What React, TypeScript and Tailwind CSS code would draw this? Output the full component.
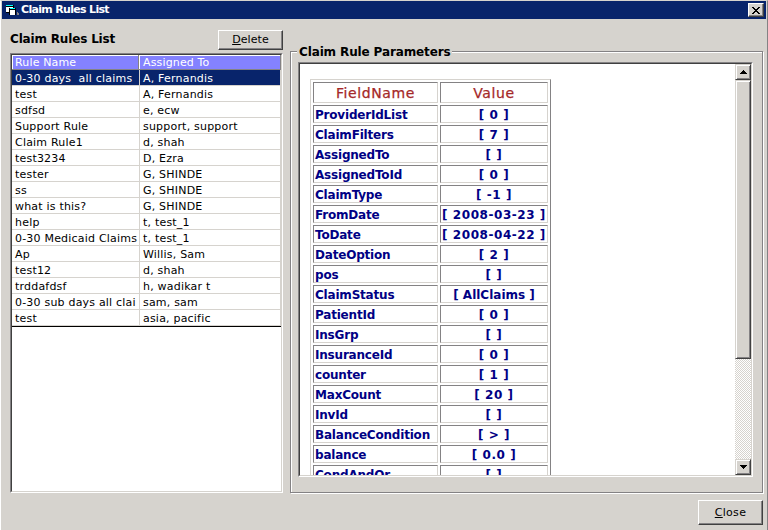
import React from "react";

const rules: [string, string][] = [
  ["0-30 days\u00a0 all claims", "A, Fernandis"],
  ["test", "A, Fernandis"],
  ["sdfsd", "e, ecw"],
  ["Support Rule", "support, support"],
  ["Claim Rule1", "d, shah"],
  ["test3234", "D, Ezra"],
  ["tester", "G, SHINDE"],
  ["ss", "G, SHINDE"],
  ["what is this?", "G, SHINDE"],
  ["help", "t, test_1"],
  ["0-30 Medicaid Claims", "t, test_1"],
  ["Ap", "Willis, Sam"],
  ["test12", "d, shah"],
  ["trddafdsf", "h, wadikar t"],
  ["0-30 sub days all clai", "sam, sam"],
  ["test", "asia, pacific"],
];

const params: [string, string][] = [
  ["ProviderIdList", "[ 0 ]"],
  ["ClaimFilters", "[ 7 ]"],
  ["AssignedTo", "[ ]"],
  ["AssignedToId", "[ 0 ]"],
  ["ClaimType", "[ -1 ]"],
  ["FromDate", "[ 2008-03-23 ]"],
  ["ToDate", "[ 2008-04-22 ]"],
  ["DateOption", "[ 2 ]"],
  ["pos", "[ ]"],
  ["ClaimStatus", "[ AllClaims ]"],
  ["PatientId", "[ 0 ]"],
  ["InsGrp", "[ ]"],
  ["InsuranceId", "[ 0 ]"],
  ["counter", "[ 1 ]"],
  ["MaxCount", "[ 20 ]"],
  ["InvId", "[ ]"],
  ["BalanceCondition", "[ > ]"],
  ["balance", "[ 0.0 ]"],
  ["CondAndOr", "[ ]"],
];

const raised =
  "border border-t-white border-l-white border-r-[#404040] border-b-[#404040] bg-[#d6d3ce] shadow-[inset_-1px_-1px_0_#848284]";
const scrollRaised =
  "border border-t-[#d6d3ce] border-l-[#d6d3ce] border-r-[#404040] border-b-[#404040] bg-[#d6d3ce] shadow-[inset_1px_1px_0_#fff,inset_-1px_-1px_0_#848284]";
const cell =
  "shrink-0 border border-t-[#848284] border-l-[#848284] border-r-[#d6d3ce] border-b-[#d6d3ce] whitespace-nowrap";

function AppIcon() {
  return (
    <svg width="13" height="12" viewBox="0 0 13 12" shapeRendering="crispEdges">
      <path d="M0 1h8v8H0z" fill="#000" />
      <path d="M0 3h7v5H0z" fill="#fff" />
      <path d="M0 1h7v1H0z" fill="#00ffff" />
      <path d="M3 4h7v7H3z" fill="#000" />
      <path d="M4 6h5v5H4z" fill="#fff" />
      <path d="M4 4h5v1H4z" fill="#00ffff" />
      <path d="M11 8h1v1h1v2h-2z" fill="#848284" />
    </svg>
  );
}

function ScrollBar() {
  return (
    <div className="flex w-4 shrink-0 flex-col bg-[repeating-conic-gradient(#d6d3ce_0_25%,#fff_0_50%)] bg-[length:2px_2px]">
      <div className={`flex h-4 items-center justify-center ${scrollRaised}`}>
        <svg width="7" height="4" viewBox="0 0 7 4" shapeRendering="crispEdges">
          <path d="M3 0h1v1h1v1h1v1h1v1H0V3h1V2h1V1h1z" />
        </svg>
      </div>
      <div className={`h-[279px] ${scrollRaised}`} />
      <div className={`mt-auto flex h-4 items-center justify-center ${scrollRaised}`}>
        <svg width="7" height="4" viewBox="0 0 7 4" shapeRendering="crispEdges">
          <path d="M0 0h7v1H6v1H5v1H4v1H3V3H2V2H1V1H0z" />
        </svg>
      </div>
    </div>
  );
}

export default function App() {
  return (
    <div className="flex h-[530px] w-[768px] flex-col overflow-hidden border-t border-r border-l border-t-[#d6d3ce] border-r-[#848284] border-l-white bg-[#d6d3ce] font-['DejaVu_Sans',Verdana,sans-serif] text-[11px] text-black">
      <header className="mr-px ml-px flex h-[18px] shrink-0 items-center bg-[#08246b] pr-[2px] pl-1">
        <AppIcon />
        <span className="ml-[2px] pt-px text-[11px] font-bold tracking-[-0.68px] whitespace-nowrap text-white">
          Claim Rules List
        </span>
        <button className={`ml-auto flex h-[14px] w-4 items-center justify-center ${raised}`}>
          <svg width="8" height="7" viewBox="0 0 8 7" shapeRendering="crispEdges">
            <path d="M0 0h2v1h1v1h2V1h1V0h2v1H7v1H6v1H5v1h1v1h1v1h1v1H6V6H5V5H3v1H2v1H0V6h1V5h1V4h1V3H2V2H1V1H0z" />
          </svg>
        </button>
      </header>

      <main className="flex h-[474px] shrink-0 pl-[9px]">
        <section className="w-[273px] shrink-0">
          <div className="flex h-[34px] justify-between">
            <h1 className="mt-[12px] text-[12px] leading-4 font-bold tracking-[-0.17px] whitespace-nowrap">
              Claim Rules List
            </h1>
            <button className={`mt-[11px] h-5 w-[65px] text-[11px] leading-[18px] tracking-[0.1px] ${raised}`}>
              <u>D</u>elete
            </button>
          </div>
          <div className="h-[440px] border border-t-[#848284] border-r-white border-b-white border-l-[#848284]">
            <div className="h-full border border-t-[#404040] border-r-[#d6d3ce] border-b-[#d6d3ce] border-l-[#404040] bg-white">
              <div className="flex h-[15px] w-[269px] border-r border-b border-[#848284] bg-[#8482ff] leading-[15px] tracking-[0.15px] text-white shadow-[inset_1px_1px_0_#fff]">
                <div className="w-[127px] border-r border-[#848284] pl-[3px]">Rule Name</div>
                <div className="flex-1 border-l border-white pl-[3px]">Assigned To</div>
              </div>
              {rules.map(([name, who], i) => (
                <div
                  key={i}
                  className={`flex h-4 w-[269px] border-b border-[#d6d3ce] leading-[17px] whitespace-nowrap ${
                    i === 0 ? "bg-[#08246b] text-white" : ""
                  }`}
                >
                  <div className="w-32 shrink-0 border-r border-[#d6d3ce] pl-[3px] tracking-[0.2px]">{name}</div>
                  <div className="flex-1 border-r border-[#d6d3ce] pl-[3px] tracking-[0.2px]">{who}</div>
                </div>
              ))}
              <div className="h-px bg-black" />
            </div>
          </div>
        </section>

        <section className="ml-[7px] flex h-[442px] w-[473px] flex-col self-end border border-[#848284] shadow-[inset_1px_1px_0_#fff,1px_1px_0_#fff]">
          <h2 className="-mt-[9px] ml-[6px] h-[19px] w-[155px] shrink-0 bg-[#d6d3ce] pl-[2px] text-[12px] leading-[18px] font-bold tracking-[-0.13px] whitespace-nowrap">
            Claim Rule Parameters
          </h2>
          <div className="ml-[7px] h-[415px] w-[455px] border border-t-[#848284] border-r-white border-b-white border-l-[#848284]">
            <div className="flex h-full border border-t-[#404040] border-r-[#d6d3ce] border-b-[#d6d3ce] border-l-[#404040] bg-white">
              <div className="flex-1 overflow-hidden pt-[15px] pl-[10px]">
                <div className="flex w-[241px] flex-col gap-[2px] border border-t-[#d6d3ce] border-r-[#848284] border-b-[#848284] border-l-[#d6d3ce] p-[2px]">
                  <div className="flex h-[21px] gap-[2px] text-center text-[14px] leading-[20px] tracking-[0.6px] text-[#a52829] [-webkit-text-stroke:0.25px_#a52829]">
                    <div className={`w-[125px] ${cell}`}>FieldName</div>
                    <div className={`w-[108px] ${cell}`}>Value</div>
                  </div>
                  {params.map(([field, value]) => (
                    <div key={field} className="flex h-[18px] gap-[2px] text-[12px] leading-[18px] font-bold text-[#000084]">
                      <div className={`w-[125px] pl-px tracking-[-0.2px] ${cell}`}>{field}</div>
                      <div
                        className={`flex w-[108px] justify-center ${
                          /[A-Za-z]/.test(value) ? "tracking-[0px]" : "tracking-[0.55px]"
                        } ${cell}`}
                      >
                        {value}
                      </div>
                    </div>
                  ))}
                </div>
              </div>
              <ScrollBar />
            </div>
          </div>
        </section>
      </main>

      <footer className="flex justify-end pt-[7px] pr-1">
        <button className={`h-[25px] w-[65px] text-[11px] leading-[23px] tracking-[0.3px] ${raised}`}>
          <u>C</u>lose
        </button>
      </footer>
    </div>
  );
}
